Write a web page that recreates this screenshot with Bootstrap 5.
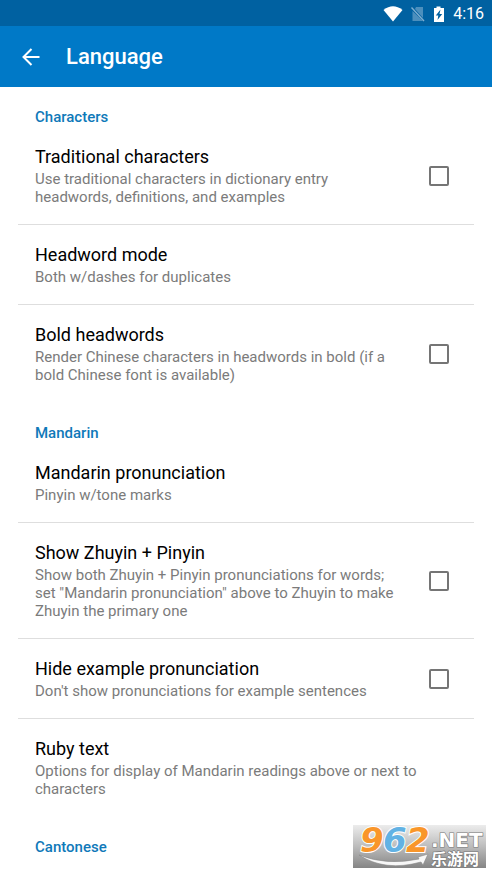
<!DOCTYPE html>
<html lang="en">
<head>
<meta charset="utf-8">
<meta name="viewport" content="width=device-width, initial-scale=1">
<title>Language</title>
<link rel="stylesheet" href="https://cdn.jsdelivr.net/npm/bootstrap@5.3.0/dist/css/bootstrap.min.css">
<style>
  body { font-family: Roboto, "Liberation Sans", sans-serif; color: #000; background: #fff; }
  .status-bar { background: #0061a1; height: 26px; font-size: 16px; line-height: 24px; padding: 2px 8px 0 0; }
  .app-bar { background: #0079c7; height: 61px; padding: 0 20px; gap: 24px; }
  .app-title { font-size: 22px; line-height: 28px; font-weight: 500; }
  .settings { padding: 0 18px; }
  .group-title { font-size: 15px; line-height: 18px; font-weight: 500; color: #0f79b9; padding: 21px 17px 1px; }
  .pref { padding: 18px 25px 18px 17px; border-bottom: 1px solid #dedede; }
  .pref.last { border-color: transparent; }
  .pref-text { max-width: 392px; }
  .has-check .pref-text { max-width: 370px; }
  .pref-title { display: block; font-size: 18px; line-height: 24px; margin-bottom: 1px; color: #000; }
  .pref-note { display: block; font-size: 15px; line-height: 18px; color: #7b7b7b; }
  .pref .form-check-input { width: 20px; height: 20px; border: 2px solid #757575; border-radius: 2px; }
  .site-logo { right: 6px; bottom: 6px; width: 133px; height: 43px; overflow: visible; }
</style>
<script src="https://cdn.jsdelivr.net/npm/bootstrap@5.3.0/dist/js/bootstrap.bundle.min.js"></script>
</head>
<body>
<div class="position-relative overflow-hidden min-vh-100">
  <div class="status-bar d-flex align-items-center justify-content-end text-white">
    <svg width="20" height="16" viewBox="0 0 20 16" aria-label="Wi-Fi"><path fill="#fff" d="M0.500 4Q10-3.500 19.500 4L10 15.500Z"/></svg>
    <svg class="ms-2" width="14" height="16" viewBox="0 0 14 16" aria-label="No SIM"><path fill="#4c8fbd" d="M5 1h7v11L4 3ZM1.500 5L12 15H1.500Z"/><path stroke="#7eaed0" stroke-width="1.400" d="M0.500 1.500L13 15"/></svg>
    <svg class="ms-2" width="12" height="17" viewBox="0 0 12 17" aria-label="Battery charging"><path fill="#fff" d="M3.500 0.500h4v1.500H11v14H1V2h2.500Z"/><path fill="#0061a1" d="M7.500 3.500L2.800 9.500h2.500L4.500 14l4.700-6H6.500Z"/></svg>
    <span class="ms-2">4:16</span>
  </div>
  <header class="app-bar d-flex align-items-center text-white">
    <button type="button" class="btn p-0 border-0 d-flex text-white" aria-label="Back">
      <svg width="22" height="22" viewBox="0 0 22 22" fill="none" stroke="#fff" stroke-width="2"><path d="M19.500 11H4M11.500 3L3.500 11l8 8"/></svg>
    </button>
    <h1 class="app-title mb-0">Language</h1>
  </header>

  <main class="settings">
    <h2 class="group-title mb-0">Characters</h2>
    <div class="pref has-check d-flex align-items-center justify-content-between">
      <label class="pref-text" for="trad"><span class="pref-title">Traditional characters</span><span class="pref-note">Use traditional characters in dictionary entry headwords, definitions, and examples</span></label>
      <input class="form-check-input m-0 flex-shrink-0" type="checkbox" id="trad">
    </div>
    <div class="pref">
      <div class="pref-text"><span class="pref-title">Headword mode</span><span class="pref-note">Both w/dashes for duplicates</span></div>
    </div>
    <div class="pref has-check last d-flex align-items-center justify-content-between">
      <label class="pref-text" for="bold"><span class="pref-title">Bold headwords</span><span class="pref-note">Render Chinese characters in headwords in bold (if a bold Chinese font is available)</span></label>
      <input class="form-check-input m-0 flex-shrink-0" type="checkbox" id="bold">
    </div>

    <h2 class="group-title mb-0">Mandarin</h2>
    <div class="pref">
      <div class="pref-text"><span class="pref-title">Mandarin pronunciation</span><span class="pref-note">Pinyin w/tone marks</span></div>
    </div>
    <div class="pref has-check d-flex align-items-center justify-content-between">
      <label class="pref-text" for="zhuyin"><span class="pref-title">Show Zhuyin + Pinyin</span><span class="pref-note">Show both Zhuyin + Pinyin pronunciations for words; set "Mandarin pronunciation" above to Zhuyin to make Zhuyin the primary one</span></label>
      <input class="form-check-input m-0 flex-shrink-0" type="checkbox" id="zhuyin">
    </div>
    <div class="pref has-check d-flex align-items-center justify-content-between">
      <label class="pref-text" for="hide"><span class="pref-title">Hide example pronunciation</span><span class="pref-note">Don't show pronunciations for example sentences</span></label>
      <input class="form-check-input m-0 flex-shrink-0" type="checkbox" id="hide">
    </div>
    <div class="pref last">
      <div class="pref-text"><span class="pref-title">Ruby text</span><span class="pref-note">Options for display of Mandarin readings above or next to characters</span></div>
    </div>

    <h2 class="group-title mb-0">Cantonese</h2>
  </main>

  <svg class="site-logo position-absolute" viewBox="0 0 133 43" role="img" aria-label="962.NET">
    <defs>
      <linearGradient id="plate" x1="0" y1="0" x2="0" y2="1"><stop offset="0" stop-color="#ececec"/><stop offset=".5" stop-color="#bcbcbc"/><stop offset="1" stop-color="#858585"/></linearGradient>
    </defs>
    <rect width="133" height="43" fill="url(#plate)"/>
    <g font-family="DejaVu Sans" font-weight="bold" font-style="italic" font-size="34" stroke="#fff" stroke-width="2" paint-order="stroke">
      <text x="7" y="27" fill="#f9962a">9</text><text x="30" y="27" fill="#62b2e4">6</text><text x="53" y="27" fill="#f9962a">2</text>
    </g>
    <path fill="#f7f7f7" stroke="#888" stroke-width=".6" d="M6 30Q34 41 66 34L65 32L75 29L70 40L68 37Q32 47 6 30Z"/>
    <g fill="#fff" stroke="#777" stroke-width="1.200" paint-order="stroke">
      <text x="78" y="22" font-family="DejaVu Sans" font-weight="bold" font-size="20">.NET</text>
      <text x="78" y="40" font-family="Noto Sans CJK SC" font-weight="bold" font-size="16">乐游网</text>
    </g>
  </svg>
</div>
</body>
</html>
